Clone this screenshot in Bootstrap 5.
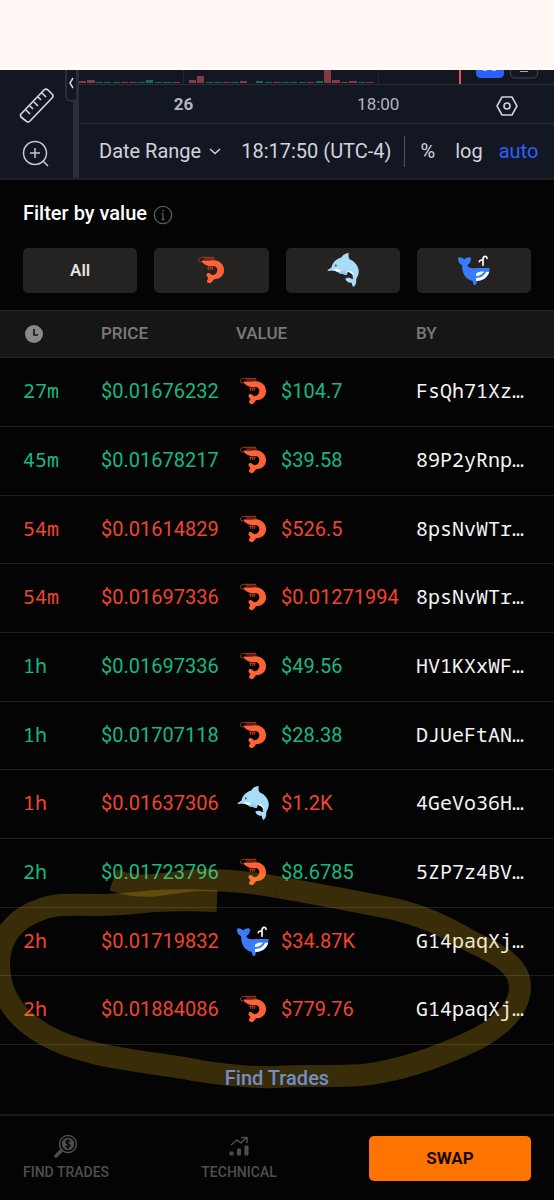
<!DOCTYPE html>
<html lang="en" data-bs-theme="dark">
<head>
<meta charset="utf-8">
<meta name="viewport" content="width=device-width, initial-scale=1">
<title>Trades</title>
<link href="https://cdn.jsdelivr.net/npm/bootstrap@5.3.0/dist/css/bootstrap.min.css" rel="stylesheet">
<style>
body { background: #040404; color: #f4f4f4; font-family: Roboto, "Liberation Sans", sans-serif; font-size: 20px; line-height: 24px; }
button { font-family: inherit; }
.top-band { height: 70px; background: #fff8f5; }
.chart-panel { background: #131722; border-bottom: 2px solid #20222a; color: #d1d4dc; height: 110px; }
.tool-rail { width: 73px; padding-top: 16px; gap: 14px; }
.gutter { width: 6px; background: #2a2e39; }
.plain-btn { background: none; border: 0; padding: 0; color: inherit; line-height: inherit; white-space: nowrap; }
.rail-handle { left: 65px; top: 0; width: 13px; height: 32px; padding: 0 2px 4px 0; background: #131722; border: 2px solid #2a2e39; border-top: 0; border-radius: 0 0 6px 6px; color: #d1d4dc; }
.volume-strip { height: 15px; border-bottom: 1px solid #2a2e39; }
.time-axis { height: 39px; border-bottom: 1px solid #2a2e39; font-size: 17px; color: #b2b5be; }
.time-axis svg { color: #d1d4dc; }
.day-mark { width: 44%; }
.hour-mark { width: 38%; }
.price-corner { padding-right: 8px; }
.range-bar { padding-left: 20px; gap: 12px; }
.clock-btn { margin-left: 8px; }
.scale-btn { margin-left: 4px; }
.divider { width: 1px; height: 31px; background: #50535e; }
.log-btn { margin-left: 8px; }
.auto-btn { color: #2962ff; }
.filter-area { padding: 20px 23px 17px; }
.filter-title { font-size: 20px; font-weight: 500; line-height: 26px; margin: 0 0 22px; gap: 6px; }
.filter-row { gap: 17px; }
.filter-btn { height: 45px; background: #242322; border: 0; border-radius: 5px; color: #e4e2e0; font-size: 17px; font-weight: 600; padding: 0 0 2px; }
.trades { table-layout: fixed; width: 100%; }
.trades th { height: 47px; background: #161616; color: #7d7978; font-size: 17px; font-weight: 500; border-top: 1px solid #242424; border-bottom: 1px solid #242424; padding: 0 0 3px; }
.trades td { height: 69px; border-bottom: 1px solid #202020; padding: 0 0 2px; white-space: nowrap; }
.trades tr:nth-child(3n) td { height: 68px; }
.trades tr > :first-child { padding-left: 23px; }
.col-time { width: 101px; }
.col-price { width: 135px; }
.col-value { width: 180px; }
.clock-icon { margin-left: 2px; }
.mono-text { font-family: "Droid Sans Mono", "Noto Sans Mono", "DejaVu Sans Mono", monospace; }
.up { color: #14b981; }
.down { color: #f0452f; }
.creature { width: 34px; height: 36px; flex: none; }
.amount { gap: 11px; }
.find-link { color: #4e81f5; font-size: 20px; font-weight: 500; text-decoration: none; height: 69px; padding-bottom: 4px; }
.marker-layer { left: 0; bottom: 0; width: 100%; height: 260px; pointer-events: none; }
.bottom-bar { border-top: 2px solid #1c1c1c; padding: 18px 23px 20px; }
.tab-btn { color: #504e4d; font-size: 14px; font-weight: 500; line-height: 20px; }
.tab-btn svg { margin-bottom: 4px; }
.swap-btn { width: 162px; height: 45px; background: #ff7300; color: #140a04; border: 0; border-radius: 5px; font-size: 17px; font-weight: 700; padding: 0 0 1px; }
</style>
</head>
<body>
<svg width="0" height="0" class="position-absolute" aria-hidden="true">
  <symbol id="shrimp" viewBox="-12 -15 102 108">
    <path fill="none" stroke="#b23a20" stroke-width="3" d="M48 1H14C2 1-1 9 3 13C7 17 14 15 15 9M50 6H18"/>
    <path fill="#ff6337" d="M12 12C20 9 30 11 48 10C67 11 78 24 78 40C78 56 66 67 48 67C45 70 42 77 38 78C31 79 26 76 27 71L31 63L26 57C24 50 29 46 34 49L43 55C52 54 58 47 58 39C58 31 52 27 46 27C36 29 22 27 12 16Z"/>
    <path fill="none" stroke="#b23a20" stroke-width="3" d="M31 28V39M37 29V39M43 29V39M28 32H47"/>
    <path fill="none" stroke="#f0582f" stroke-width="2" d="M58 13L53 25M70 23L59 31M77 38H62M74 52L61 46M61 64L54 55"/>
  </symbol>
  <symbol id="dolphin" viewBox="-3 -3 102 110">
    <path fill="#a9dcf6" d="M0 53L13 44C16 29 27 18 43 14C47 5 55 1 66 0C64 7 64 13 68 19C86 26 98 43 96 60C95 70 90 76 88 82C90 92 85 100 80 104C76 101 76 95 74 91C66 92 58 88 55 79C61 73 69 75 78 80C83 67 77 60 65 57C60 58 63 66 55 67C51 66 50 62 47 63C39 64 34 61 31 57C22 53 11 55 3 55Z"/>
    <path fill="#fff" d="M20 51C28 47 35 51 42 54C35 60 27 58 20 51ZM62 57C72 52 84 61 80 76L77 78C81 68 76 61 62 57Z"/>
    <path fill="#8accee" d="M34 57C43 58 50 55 54 53C55 61 60 60 61 67C54 69 50 64 46 64C40 64 36 61 34 57Z"/>
    <circle cx="26" cy="38" r="3" fill="#235777"/>
  </symbol>
  <symbol id="whale" viewBox="-3 -9 102 108">
    <path fill="#3a7bfa" d="M0 11C0 5 10 5 19 13C28 5 38 5 39 11C39 20 34 27 28 30C30 38 40 41 53 39H95C95 60 82 76 57 79L55 87C53 91 47 91 46 87L44 78C26 74 12 60 12 30C4 26 0 20 0 11Z"/>
    <path fill="#f4faff" d="M54 78V69C69 68 80 61 84 50H94C89 67 76 77 54 78ZM54 63V56C62 50 70 49 78 50C73 58 66 62 54 63Z"/>
    <path fill="none" stroke="#fff" stroke-width="5" stroke-linecap="round" d="M75 31V13C75 2 86 1 87 10M75 17C69 13 65 16 64 20"/>
  </symbol>
</svg>

<div class="top-band"></div>

<section class="chart-panel d-flex position-relative">
  <div class="tool-rail d-flex flex-column align-items-center flex-shrink-0">
    <button class="plain-btn d-flex" aria-label="Measure"><svg width="36" height="38" viewBox="0 0 36 38" fill="none" stroke="#d1d4dc" stroke-width="1.7" stroke-linejoin="round"><path d="M2 28L25 4Q27 2 29 4L33 8Q35 10 33 12L11 35Q9 37 7 35L2 31Q1 29 2 28ZM7 24L11 28M11 20L14 23M15 16L19 20M19 11L22 14M23 7L27 11"/></svg></button>
    <button class="plain-btn d-flex" aria-label="Zoom in"><svg width="30" height="30" viewBox="0 0 30 30" fill="none" stroke="#c5c8d0" stroke-width="1.5"><circle cx="13" cy="15" r="11.5"/><path d="M13 10V20M8 15H18M21 23L26 28"/></svg></button>
  </div>
  <div class="gutter flex-shrink-0"></div>
  <button class="rail-handle position-absolute d-flex align-items-center justify-content-center" aria-label="Collapse tools"><svg class="flex-shrink-0" width="6" height="12" viewBox="0 0 6 12" fill="none" stroke="currentColor" stroke-width="1.5"><path d="M5 1L2 6L5 11"/></svg></button>
  <div class="flex-fill d-flex flex-column overflow-hidden">
    <div class="volume-strip">
      <svg class="w-100 d-block" height="14" viewBox="0 0 475 14" preserveAspectRatio="xMinYMax slice">
        <path stroke="#222632" d="M104.500 0V14M299.500 0V14"/>
        <path fill="#863843" d="M0 11h7v2h-7zM8 10h8v3h-8zM42 12h7v1h-7zM50 12h8v1h-8zM93 12h8v1h-8zM110 10h7v3h-7zM118 6h7v7h-7zM144 12h7v1h-7zM161 11h7v2h-7zM194 12h8v1h-8zM228 12h7v1h-7zM245 0h7v13h-7zM253 10h8v3h-8zM262 12h7v1h-7zM270 11h8v2h-8zM287 12h8v1h-8z"/>
        <path fill="#176958" d="M17 12h7v1h-7zM25 12h7v1h-7zM34 12h7v1h-7zM59 12h7v1h-7zM67 10h7v3h-7zM76 12h7v1h-7zM84 12h8v1h-8zM127 12h7v1h-7zM135 12h8v1h-8zM152 12h8v1h-8zM177 11h7v2h-7zM186 12h7v1h-7zM203 12h7v1h-7zM211 12h7v1h-7zM220 12h7v1h-7zM237 11h7v2h-7zM279 12h7v1h-7z"/>
        <path fill="#f04a5c" d="M380 0h2v14h-2z"/>
        <path fill="#2962ff" d="M397 0h28v3q0 5-5 5h-18q-5 0-5-5z"/>
        <path stroke="#a9c0ff" d="M404 .5h4M413 .5h4"/>
        <path fill="none" stroke="#434651" d="M431.500 0v3q0 5 5 5h17q5 0 5-5v-3"/>
        <path stroke="#a3a6af" d="M441 1.500h8"/>
      </svg>
    </div>
    <div class="time-axis d-flex align-items-center text-center">
      <div class="day-mark fw-bold">26</div>
      <div class="hour-mark">18:00</div>
      <div class="price-corner flex-fill"><button class="plain-btn d-inline-flex align-middle" aria-label="Settings"><svg width="22" height="20" viewBox="0 0 22 20" fill="none" stroke="currentColor" stroke-width="1.6"><path d="M6 1H16L21 10L16 19H6L1 10Z"/><circle cx="11" cy="10" r="3"/></svg></button></div>
    </div>
    <div class="range-bar d-flex align-items-center flex-fill">
      <button class="plain-btn d-flex align-items-center gap-2">Date Range <svg width="12" height="7" viewBox="0 0 12 7" fill="none" stroke="currentColor" stroke-width="1.5"><path d="M1 1L6 5.500L11 1"/></svg></button>
      <button class="plain-btn clock-btn">18:17:50 (UTC-4)</button>
      <span class="divider"></span>
      <button class="plain-btn scale-btn">%</button>
      <button class="plain-btn log-btn">log</button>
      <button class="plain-btn scale-btn auto-btn">auto</button>
    </div>
  </div>
</section>

<main class="position-relative">
  <section class="filter-area">
    <h1 class="filter-title d-flex align-items-center">Filter by value
      <svg class="mt-1" width="20" height="20" viewBox="0 0 20 20" fill="none" stroke="#5c5a59" stroke-width="1.300"><circle cx="10" cy="10" r="8.700"/><path d="M10 8.500V14.500M10 5V6.700M8.500 8.700H10M8.500 14.500H11.500"/></svg></h1>
    <div class="filter-row d-flex">
      <button class="filter-btn w-100">All</button>
      <button class="filter-btn w-100 d-flex align-items-center justify-content-center" aria-label="Shrimp"><svg class="creature"><use href="#shrimp"/></svg></button>
      <button class="filter-btn w-100 d-flex align-items-center justify-content-center" aria-label="Dolphin"><svg class="creature"><use href="#dolphin"/></svg></button>
      <button class="filter-btn w-100 d-flex align-items-center justify-content-center" aria-label="Whale"><svg class="creature"><use href="#whale"/></svg></button>
    </div>
  </section>

  <table class="trades align-middle">
    <colgroup><col class="col-time"><col class="col-price"><col class="col-value"><col></colgroup>
    <thead><tr>
      <th scope="col" aria-label="Time"><svg class="clock-icon" width="18" height="18" viewBox="0 0 18 18"><circle cx="9" cy="9" r="9" fill="#8b8785"/><path d="M9 4V10H13" fill="none" stroke="#161616" stroke-width="1.700"/></svg></th>
      <th scope="col">PRICE</th><th scope="col">VALUE</th><th scope="col">BY</th>
    </tr></thead>
    <tbody id="rows"></tbody>
  </table>

  <div class="position-relative">
    <a href="#" class="find-link d-flex align-items-center justify-content-center">Find Trades</a>
    <svg class="marker-layer position-absolute" viewBox="0 855 554 260" preserveAspectRatio="none" fill="none" stroke="#fcc21c" stroke-opacity=".21" stroke-width="22" aria-hidden="true">
      <path d="M217 902C195 901 173 901 156 902C134 904 116 906 96 906C75 906 57 904 42 910C15 919-1 938-1 965C-1 998 17 1020 45 1036C87 1060 150 1062 200 1072C225 1076 250 1079 277 1078C313 1075 349 1080 382 1073C419 1066 450 1053 479 1039C507 1023 520 1006 520 988C520 966 496 954 474 944C443 926 423 917 394 910C354 902 316 895 277 888"/>
      <path d="M277 888C251 883 226 881 200 881C175 882 157 889 133 886C126 885 119 883 113 881"/>
    </svg>
  </div>
</main>

<footer class="bottom-bar d-flex align-items-center justify-content-between">
  <button class="plain-btn tab-btn d-flex flex-column align-items-center">
    <svg width="24" height="24" viewBox="0 0 24 24" fill="none" stroke="currentColor"><circle cx="14" cy="10" r="8.500" stroke-width="1.500"/><circle cx="14" cy="10" r="6.200" fill="currentColor" stroke="none"/><path d="M2 22L7 17" stroke-width="3.500" stroke-linecap="round"/><path d="M16.500 7.500C15 6 11.500 6.500 12 8.500C12.500 10.500 16 9.500 16 11.500C16 13.500 13 13.500 11.500 12M14 5V15" stroke="#040404" stroke-width="1.300"/></svg>
    FIND TRADES</button>
  <button class="plain-btn tab-btn d-flex flex-column align-items-center">
    <svg width="22" height="24" viewBox="0 0 22 24" fill="none" stroke="currentColor"><path d="M3 11L9 6L13 9L18 4M13 3.500H19V9" stroke-width="1.500"/><path d="M2 18H5V21H2ZM9.500 15H12.500V21H9.500ZM17 12H20V21H17Z" fill="currentColor"/></svg>
    TECHNICAL</button>
  <button class="swap-btn">SWAP</button>
</footer>

<script>
const trades = [
  ["27m", "$0.01676232", "shrimp", "$104.7", "FsQh71Xz…", "up"],
  ["45m", "$0.01678217", "shrimp", "$39.58", "89P2yRnp…", "up"],
  ["54m", "$0.01614829", "shrimp", "$526.5", "8psNvWTr…", "down"],
  ["54m", "$0.01697336", "shrimp", "$0.01271994", "8psNvWTr…", "down"],
  ["1h", "$0.01697336", "shrimp", "$49.56", "HV1KXxWF…", "up"],
  ["1h", "$0.01707118", "shrimp", "$28.38", "DJUeFtAN…", "up"],
  ["1h", "$0.01637306", "dolphin", "$1.2K", "4GeVo36H…", "down"],
  ["2h", "$0.01723796", "shrimp", "$8.6785", "5ZP7z4BV…", "up"],
  ["2h", "$0.01719832", "whale", "$34.87K", "G14paqXj…", "down"],
  ["2h", "$0.01884086", "shrimp", "$779.76", "G14paqXj…", "down"]
];
document.getElementById("rows").innerHTML = trades.map(([time, price, icon, value, by, dir]) => `
  <tr><td class="${dir} mono-text">${time}</td><td class="${dir}">${price}</td>
  <td class="${dir}"><div class="amount d-flex align-items-center"><svg class="creature"><use href="#${icon}"/></svg><span>${value}</span></div></td>
  <td class="mono-text">${by}</td></tr>`).join("");
</script>
<script src="https://cdn.jsdelivr.net/npm/bootstrap@5.3.0/dist/js/bootstrap.bundle.min.js"></script>
</body>
</html>
